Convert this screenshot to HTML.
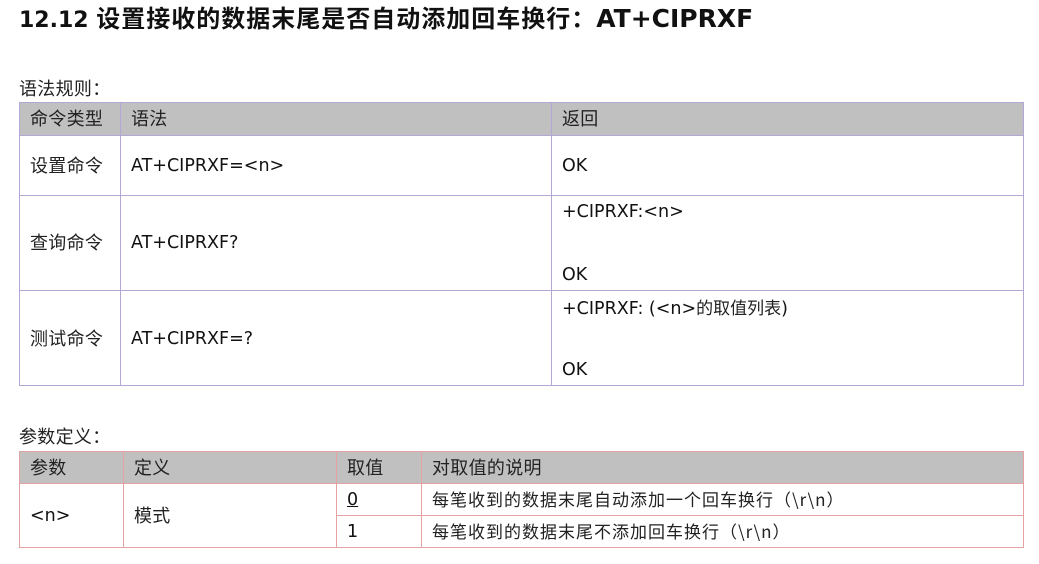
<!DOCTYPE html>
<html><head><meta charset="utf-8"><style>
body{margin:0;width:1039px;height:564px;background:#fff;position:relative;overflow:hidden;font-family:"DejaVu Sans","Noto Sans CJK SC",sans-serif;color:#111}
div{position:absolute}
.t{white-space:nowrap;font-size:17.5px;line-height:20px;font-family:"DejaVu Sans",sans-serif}
.c{font-size:18px;font-family:"Noto Sans CJK SC","WenQuanYi Zen Hei",sans-serif;white-space:nowrap;line-height:20px;color:#222;letter-spacing:0.3px}
.s{font-size:17px;letter-spacing:1px}
.hl{height:1px}
.vl{width:1px}
</style></head><body>
<div style="left:19px;top:4px;font-size:22px;line-height:26px;font-weight:bold;white-space:nowrap;font-family:'DejaVu Sans','Noto Sans CJK SC',sans-serif">12.12 <span style="font-family:'Noto Sans CJK SC',sans-serif;font-size:24px;letter-spacing:1px">设置接收的数据末尾是否自动添加回车换行：</span><span style="font-size:25px">AT+CIPRXF</span></div>

<div class="c" style="left:19px;top:78px">语法规则：</div>
<div style="left:19px;top:102px;width:1005px;height:33px;background:#c0c0c0"></div>
<div class="hl" style="left:19px;top:102px;width:1005px;background:#b4a7d6"></div>
<div class="hl" style="left:19px;top:135px;width:1005px;background:#b4a7d6"></div>
<div class="hl" style="left:19px;top:195px;width:1005px;background:#b4a7d6"></div>
<div class="hl" style="left:19px;top:290px;width:1005px;background:#b4a7d6"></div>
<div class="hl" style="left:19px;top:385px;width:1005px;background:#b4a7d6"></div>
<div class="vl" style="left:19px;top:102px;height:284px;background:#b4a7d6"></div>
<div class="vl" style="left:120px;top:102px;height:284px;background:#b4a7d6"></div>
<div class="vl" style="left:551px;top:102px;height:284px;background:#b4a7d6"></div>
<div class="vl" style="left:1023px;top:102px;height:284px;background:#b4a7d6"></div>
<div class="c" style="left:30px;top:108px">命令类型</div>
<div class="c" style="left:131px;top:108px">语法</div>
<div class="c" style="left:562px;top:108px">返回</div>
<div class="c" style="left:30px;top:155px">设置命令</div>
<div class="t" style="left:131px;top:156px">AT+CIPRXF=&lt;n&gt;</div>
<div class="t" style="left:562px;top:156px">OK</div>
<div class="c" style="left:30px;top:232px">查询命令</div>
<div class="t" style="left:131px;top:233px">AT+CIPRXF?</div>
<div class="t" style="left:562px;top:202px">+CIPRXF:&lt;n&gt;</div>
<div class="t" style="left:562px;top:265px">OK</div>
<div class="c" style="left:30px;top:328px">测试命令</div>
<div class="t" style="left:131px;top:329px">AT+CIPRXF=?</div>
<div class="t" style="left:562px;top:297px">+CIPRXF: (&lt;n&gt;<span class="c" style="position:static;letter-spacing:0;font-size:17px">的取值列表</span>)</div>
<div class="t" style="left:562px;top:360px">OK</div>

<div class="c" style="left:19px;top:426px">参数定义：</div>
<div style="left:19px;top:451px;width:1005px;height:32px;background:#c0c0c0"></div>
<div class="hl" style="left:19px;top:451px;width:1005px;background:#e6a3a3"></div>
<div class="hl" style="left:19px;top:483px;width:1005px;background:#e6a3a3"></div>
<div class="hl" style="left:336px;top:515px;width:688px;background:#e6a3a3"></div>
<div class="hl" style="left:19px;top:547px;width:1005px;background:#e6a3a3"></div>
<div class="vl" style="left:19px;top:451px;height:97px;background:#e6a3a3"></div>
<div class="vl" style="left:123px;top:451px;height:97px;background:#e6a3a3"></div>
<div class="vl" style="left:336px;top:451px;height:97px;background:#e6a3a3"></div>
<div class="vl" style="left:421px;top:451px;height:97px;background:#e6a3a3"></div>
<div class="vl" style="left:1023px;top:451px;height:97px;background:#e6a3a3"></div>
<div class="c" style="left:30px;top:457px">参数</div>
<div class="c" style="left:134px;top:457px">定义</div>
<div class="c" style="left:347px;top:457px">取值</div>
<div class="c" style="left:432px;top:457px">对取值的说明</div>
<div class="t" style="left:30px;top:506px">&lt;n&gt;</div>
<div class="c" style="left:134px;top:505px">模式</div>
<div class="t" style="left:347px;top:490px;text-decoration:underline">0</div>
<div class="c s" style="left:432px;top:489px">每笔收到的数据末尾自动添加一个回车换行（\r\n）</div>
<div class="t" style="left:347px;top:522px">1</div>
<div class="c s" style="left:432px;top:521px">每笔收到的数据末尾不添加回车换行（\r\n）</div>
</body></html>
